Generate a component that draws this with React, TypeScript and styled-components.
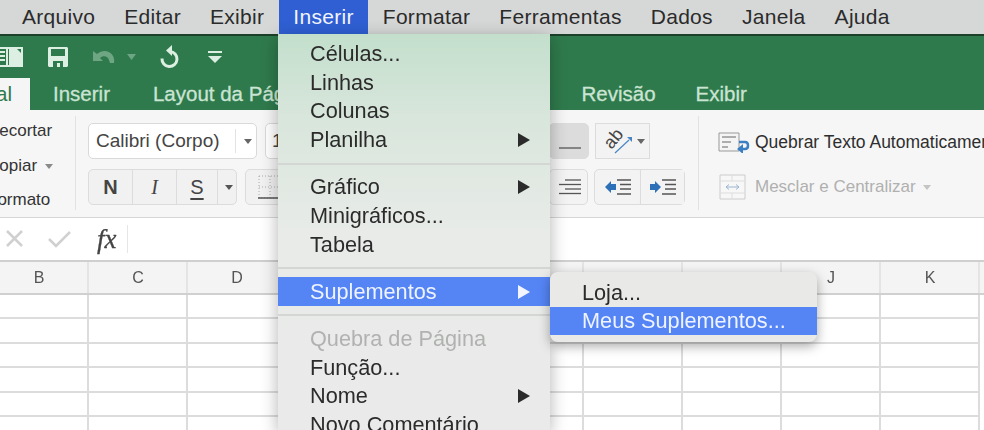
import React from 'react'
import styled, { createGlobalStyle } from 'styled-components'

const GlobalStyle = createGlobalStyle`
	html, body {
		margin: 0;
		padding: 0;
		background: #fff;
		overflow: hidden;
	}
	* {
		box-sizing: border-box;
	}
`

const menuItems = ['Arquivo', 'Editar', 'Exibir', 'Inserir', 'Formatar', 'Ferramentas', 'Dados', 'Janela', 'Ajuda']
// E to I sit behind the open menus
const columns = ['B', 'C', 'D', '', '', '', '', '', 'J', 'K']
const rows = [0, 1, 2, 3, 4, 5]

export default function App() {
	return (
		<Page>
			<GlobalStyle />
			<MenuBar>
				{menuItems.map((item) => (
					<MenuBarItem key={item} $active={item === 'Inserir'}>
						{item}
					</MenuBarItem>
				))}
			</MenuBar>

			<QuickBar>
				<QuickIcon $w={24} $ml={-1}>
					<svg width="24" height="22" viewBox="0 0 24 22">
						<path d="M-2 2h25v18H-2z" fill="none" stroke="#dcefe2" strokeWidth="2" />
						<path d="M8 2v18" stroke="#dcefe2" strokeWidth="2" />
						<path d="M10 3h8l5 5v12H10z" fill="#dcefe2" />
						<path d="M0 6h6M0 10h6M0 14h6" stroke="#dcefe2" strokeWidth="2" />
					</svg>
				</QuickIcon>
				<QuickIcon $w={22} $ml={24}>
					<svg width="22" height="22" viewBox="0 0 22 22">
						<path d="M2 1h18l1 1v18l-1 1H2l-1-1V2z" fill="#dcefe2" />
						<path d="M4 3h14v7H4z" fill="#2f7a4c" />
						<path d="M6 15h10v6H6z" fill="#2f7a4c" />
						<path d="M10 17h3v4h-3z" fill="#dcefe2" />
					</svg>
				</QuickIcon>
				<QuickIcon $w={26} $ml={23}>
					<svg width="26" height="20" viewBox="0 0 26 20">
						<path d="M1 4v10h10L8 11c3-3 8-2 9 2l1 3h4c2-10-9-16-17-9z" fill="#6ea583" />
					</svg>
				</QuickIcon>
				<QuickIcon $w={10} $ml={9}>
					<svg width="10" height="6" viewBox="0 0 10 6">
						<path d="M0 0h9L4.500 6z" fill="#6ea583" />
					</svg>
				</QuickIcon>
				<QuickIcon $w={20} $ml={22}>
					<svg width="20" height="24" viewBox="0 0 20 24">
						<path d="M11 6.500a7.500 7.500 0 1 1-8 7" fill="none" stroke="#dcefe2" strokeWidth="3" />
						<path d="M13 0v11L7 5.500z" fill="#dcefe2" />
					</svg>
				</QuickIcon>
				<QuickIcon $w={14} $ml={29}>
					<svg width="14" height="14" viewBox="0 0 14 14">
						<path d="M0 1h14v2H0z" fill="#dcefe2" />
						<path d="M0 6h14l-7 7z" fill="#dcefe2" />
					</svg>
				</QuickIcon>
			</QuickBar>

			<TabBar>
				<HomeTab>Página Inicial</HomeTab>
				<Tab $ml={23}>Inserir</Tab>
				<Tab $ml={43}>Layout da Página</Tab>
				<Tab $ml={269}>Revisão</Tab>
				<Tab $ml={40}>Exibir</Tab>
			</TabBar>

			<Ribbon>
				<ClipboardGroup>
					<ClipLabel>Recortar</ClipLabel>
					<ClipLabel>
						Copiar <Caret $color="#8a8a8a" />
					</ClipLabel>
					<ClipLabel>Formato</ClipLabel>
				</ClipboardGroup>

				<FontGroup>
					<ControlRow>
						<FontSelect>
							<span>Calibri (Corpo)</span>
							<SelectArrow>
								<Caret $color="#666" />
							</SelectArrow>
						</FontSelect>
						<SizeSelect>12</SizeSelect>
					</ControlRow>
					<ControlRow>
						<ButtonGroup>
							<StyleButton $w={43} $weight={700}>N</StyleButton>
							<StyleButton $w={44} $italic>I</StyleButton>
							<StyleButton $w={41} $underline>S</StyleButton>
							<StyleButton $w={19}>
								<Caret $color="#555" />
							</StyleButton>
						</ButtonGroup>
						<BorderButton>
							<svg width="24" height="24" viewBox="0 0 24 24">
								<path d="M1 1h22v22H1zM12 1v22M1 12h22" fill="none" stroke="#aaa" strokeDasharray="1 2" />
								<path d="M0 23h24" stroke="#555" strokeWidth="1.500" />
							</svg>
						</BorderButton>
					</ControlRow>
				</FontGroup>

				<AlignGroup>
					<AlignRow>
						<IconButton $w={40} $pressed>
							<LinesIcon $lines={[22]} $bottom />
						</IconButton>
						<IconButton $w={55}>
							<svg width="34" height="30" viewBox="0 0 34 30">
								<text x="14" y="18" textAnchor="middle" fontSize="18" fontFamily="Liberation Sans, sans-serif" fill="#444" transform="rotate(-50 14 13)">ab</text>
								<path d="M15 27l14-13" stroke="#4a86c5" strokeWidth="1.200" />
								<path d="M27 11h5v5z" fill="#4a86c5" />
							</svg>
							<Caret $color="#666" />
						</IconButton>
					</AlignRow>
					<AlignRow>
						<IconButton $w={40}>
							<LinesIcon $lines={[16, 22, 16, 22]} />
						</IconButton>
						<ButtonGroup>
							<IconButton $w={45} $flat>
								<IndentIcon $flip />
							</IconButton>
							<IconButton $w={44} $flat>
								<IndentIcon />
							</IconButton>
						</ButtonGroup>
					</AlignRow>
				</AlignGroup>

				<WrapGroup>
					<WrapRow>
						<svg width="32" height="22" viewBox="0 0 32 22">
							<path d="M1 2h20v18H1z" fill="#f4f4f4" stroke="#999" />
							<path d="M4 6h14M4 11h9M4 16h6" stroke="#666" />
							<path d="M21 11h6c4 0 4 7 0 7h-3" fill="none" stroke="#3a7fc4" strokeWidth="2.500" />
							<path d="M25 13v10l-6-5z" fill="#3a7fc4" />
						</svg>
						<WrapLabel>Quebrar Texto Automaticamente</WrapLabel>
					</WrapRow>
					<WrapRow>
						<svg width="32" height="28" viewBox="0 0 32 28">
							<path d="M2 2h25v24H2z" fill="#f7f7f7" stroke="#ccc" />
							<path d="M2 8h25M2 20h25M14 2v6M14 20v6" stroke="#ddd" />
							<path d="M8 14h13M8 14l3-2.500M8 14l3 2.500M21 14l-3-2.500M21 14l-3 2.500" stroke="#9bb6d0" fill="none" />
						</svg>
						<MergeLabel>
							Mesclar e Centralizar <Caret $color="#c4c4c4" />
						</MergeLabel>
					</WrapRow>
				</WrapGroup>
			</Ribbon>

			<FormulaBar>
				<svg width="22" height="20" viewBox="0 0 22 20">
					<path d="M2 2l15 15M17 2L2 17" stroke="#d0d0d0" strokeWidth="2.500" />
				</svg>
				<svg width="26" height="20" viewBox="0 0 26 20">
					<path d="M2 10l7 7L23 3" fill="none" stroke="#d0d0d0" strokeWidth="2.500" />
				</svg>
				<FxLabel>fx</FxLabel>
				<FormulaInput />
			</FormulaBar>

			<Sheet>
				<HeaderRow>
					{columns.map((c, i) => (
						<HeaderCell key={i}>{c}</HeaderCell>
					))}
				</HeaderRow>
				{rows.map((r) => (
					<SheetRow key={r}>
						{columns.map((c, i) => (
							<SheetCell key={i} />
						))}
					</SheetRow>
				))}
			</Sheet>

			<InsertMenu>
				<MenuRow>Células...</MenuRow>
				<MenuRow>Linhas</MenuRow>
				<MenuRow>Colunas</MenuRow>
				<MenuRow $sub>Planilha</MenuRow>
				<Separator />
				<MenuRow $sub>Gráfico</MenuRow>
				<MenuRow>Minigráficos...</MenuRow>
				<MenuRow>Tabela</MenuRow>
				<Separator />
				<MenuRow $sub $selected>Suplementos</MenuRow>
				<Separator />
				<MenuRow $disabled>Quebra de Página</MenuRow>
				<MenuRow>Função...</MenuRow>
				<MenuRow $sub>Nome</MenuRow>
				<MenuRow>Novo Comentário</MenuRow>
			</InsertMenu>

			<SubMenu>
				<SubMenuRow>Loja...</SubMenuRow>
				<SubMenuRow $selected>Meus Suplementos...</SubMenuRow>
			</SubMenu>
		</Page>
	)
}

function Caret({ $color }: { $color: string }) {
	return (
		<CaretMark viewBox="0 0 8 5" width="8" height="5">
			<path d="M0 0h8L4 5z" fill={$color} />
		</CaretMark>
	)
}

function LinesIcon({ $lines, $bottom }: { $lines: number[]; $bottom?: boolean }) {
	return (
		<svg width="24" height="24" viewBox="0 0 24 24">
			{$lines.map((w, i) => (
				<path key={i} d={`M${24 - w} ${$bottom ? 19 : 5 + i * 4.500}h${w}`} stroke="#555" strokeWidth="1.300" />
			))}
		</svg>
	)
}

function IndentIcon({ $flip }: { $flip?: boolean }) {
	return (
		<svg width="28" height="20" viewBox="0 0 28 20">
			<path d="M13 3h14M16 7.500h11M16 12h11M13 17h14" stroke="#555" strokeWidth="1.300" />
			{$flip ? (
				<path d="M1 10l6-6v3h5v6H7v3z" fill="#2d70b8" />
			) : (
				<path d="M12 10L6 4v3H1v6h5v3z" fill="#2d70b8" />
			)}
		</svg>
	)
}

const Page = styled.div`
	position: relative;
	width: 984px;
	height: 430px;
	overflow: hidden;
	font-family: 'Liberation Sans', Arial, sans-serif;
	filter: blur(0.45px);
`

const MenuBar = styled.div`
	display: flex;
	height: 34px;
	padding-left: 7.500px;
	background: #d6d8d8;
`

const MenuBarItem = styled.div<{ $active?: boolean }>`
	display: flex;
	align-items: center;
	height: 34px;
	padding: 0 14.500px;
	font-size: 21px;
	letter-spacing: 0.3px;
	color: ${(p) => (p.$active ? '#f2f5ff' : '#2b2b2b')};
	background: ${(p) => (p.$active ? '#2f5fd3' : 'transparent')};
`

const QuickBar = styled.div`
	display: flex;
	align-items: center;
	height: 44px;
	background: #2f7a4c;
	border-top: 2px solid #1c3f2a;
`

const QuickIcon = styled.div<{ $w: number; $ml: number }>`
	display: flex;
	justify-content: center;
	width: ${(p) => p.$w}px;
	margin-left: ${(p) => p.$ml}px;
`

const TabBar = styled.div`
	display: flex;
	height: 32px;
	background: #2f7a4c;
`

const HomeTab = styled.div`
	display: flex;
	justify-content: flex-end;
	align-items: center;
	width: 30px;
	padding-right: 18px;
	overflow: hidden;
	white-space: nowrap;
	font-size: 20.500px;
	background: #f5f5f5;
	color: #2f7a4c;
`

const Tab = styled.div<{ $ml: number }>`
	display: flex;
	align-items: center;
	margin-left: ${(p) => p.$ml}px;
	font-size: 20.500px;
	white-space: nowrap;
	color: #cbe4d3;
	-webkit-text-stroke: 0.3px #cbe4d3;
`

const Ribbon = styled.div`
	display: flex;
	height: 108px;
	background: #f6f6f6;
	border-bottom: 1px solid #d6d6d6;
	white-space: nowrap;
	& > * {
		flex: none;
	}
`

const ClipboardGroup = styled.div`
	display: flex;
	flex-direction: column;
	justify-content: space-between;
	width: 76px;
	height: 94px;
	margin-top: 6px;
	padding: 5px 0 0;
	overflow: hidden;
	border-right: 1px solid #e2e2e2;
`

const ClipLabel = styled.div`
	margin-left: -13px;
	font-size: 17px;
	color: #333;
`

const CaretMark = styled.svg`
	margin-left: 3px;
	vertical-align: middle;
`

const FontGroup = styled.div`
	display: flex;
	flex-direction: column;
	gap: 10px;
	width: 260px;
	margin-left: 12px;
	padding-top: 13px;
`

const ControlRow = styled.div`
	display: flex;
	gap: 8px;
	height: 36px;
`

const FontSelect = styled.div`
	display: flex;
	align-items: center;
	justify-content: space-between;
	width: 169px;
	padding-left: 7px;
	font-size: 19px;
	color: #444;
	background: #fff;
	border: 1px solid #d9d9d9;
	border-radius: 5px;
`

const SelectArrow = styled.div`
	display: flex;
	align-items: center;
	justify-content: center;
	width: 21px;
	height: 24px;
	border-left: 1px solid #e2e2e2;
`

const SizeSelect = styled.div`
	display: flex;
	align-items: center;
	width: 60px;
	padding-left: 6px;
	font-size: 19px;
	color: #444;
	background: #fff;
	border: 1px solid #d9d9d9;
	border-radius: 5px;
`

const ButtonGroup = styled.div`
	display: flex;
	background: #f1f1f1;
	border: 1px solid #dcdcdc;
	border-radius: 5px;
`

const StyleButton = styled.div<{ $w: number; $weight?: number; $italic?: boolean; $underline?: boolean }>`
	display: flex;
	align-items: center;
	justify-content: center;
	width: ${(p) => p.$w}px;
	font-size: 20px;
	font-weight: ${(p) => p.$weight ?? 400};
	font-style: ${(p) => (p.$italic ? 'italic' : 'normal')};
	font-family: ${(p) => (p.$italic ? "'Liberation Serif', serif" : "'Liberation Sans', sans-serif")};
	text-decoration: ${(p) => (p.$underline ? 'underline' : 'none')};
	text-underline-offset: 4px;
	color: #444;
	& + & {
		border-left: 1px solid #dcdcdc;
	}
`

const BorderButton = styled.div`
	display: flex;
	align-items: center;
	justify-content: center;
	width: 50px;
	background: #f1f1f1;
	border: 1px solid #dcdcdc;
	border-radius: 5px;
`

const AlignGroup = styled.div`
	display: flex;
	flex-direction: column;
	gap: 10px;
	width: 337px;
	padding: 13px 0 0 201px;
`

const AlignRow = styled.div`
	display: flex;
	gap: 6px;
	height: 36px;
`

const IconButton = styled.div<{ $w: number; $pressed?: boolean; $flat?: boolean }>`
	display: flex;
	align-items: center;
	justify-content: center;
	width: ${(p) => p.$w}px;
	background: ${(p) => (p.$pressed ? '#dcdcdc' : '#f3f3f3')};
	border: ${(p) => (p.$flat ? 'none' : '1px solid #dcdcdc')};
	border-radius: 5px;
	& + & {
		${(p) => (p.$flat ? 'border-left: 1px solid #dcdcdc; border-radius: 0;' : '')}
	}
`

const WrapGroup = styled.div`
	display: flex;
	flex-direction: column;
	gap: 17px;
	height: 94px;
	margin-top: 6px;
	margin-left: 13px;
	padding: 12px 0 0 19px;
	border-left: 1px solid #e2e2e2;
`

const WrapRow = styled.div`
	display: flex;
	align-items: center;
	gap: 5px;
	height: 28px;
`

const WrapLabel = styled.div`
	font-size: 17.500px;
	color: #2e2e2e;
`

const MergeLabel = styled.div`
	font-size: 17px;
	color: #b0b0b0;
`

const FormulaBar = styled.div`
	display: flex;
	align-items: center;
	gap: 20px;
	height: 44px;
	padding-left: 5px;
	background: #fff;
	border-bottom: 2px solid #cfcfcf;
`

const FxLabel = styled.div`
	margin-left: 4px;
	font-family: 'Liberation Serif', serif;
	font-size: 27px;
	font-style: italic;
	color: #444;
	-webkit-text-stroke: 0.3px #444;
`

const FormulaInput = styled.div`
	width: 1px;
	height: 28px;
	margin-left: -10px;
	background: #e6e6e6;
`

const Sheet = styled.div`
	display: flex;
	flex-direction: column;
	margin-left: -10px;
`

const HeaderRow = styled.div`
	display: flex;
	height: 33px;
	background: #f4f4f4;
	border-bottom: 2px solid #d0d0d0;
`

const HeaderCell = styled.div`
	display: flex;
	flex: 0 0 99px;
	align-items: center;
	justify-content: center;
	padding-left: 1px;
	font-size: 16px;
	color: #555;
	border-right: 2px solid #e4e4e4;
`

const SheetRow = styled.div`
	display: flex;
	height: 24.400px;
`

const SheetCell = styled.div`
	flex: 0 0 99px;
	border-right: 2px solid #dcdcdc;
	border-bottom: 2px solid #dcdcdc;
`

const InsertMenu = styled.div`
	position: absolute;
	top: 34px;
	left: 278px;
	width: 272px;
	height: 396px;
	padding-top: 5.600px;
	overflow: hidden;
	background: linear-gradient(180deg, #c3dfcc 0%, #d9e6dc 22%, #e8ebe8 50%, #eaeaea 100%);
	box-shadow: 0 4px 16px rgba(0, 0, 0, 0.3);
`

const MenuRow = styled.div<{ $sub?: boolean; $selected?: boolean; $disabled?: boolean }>`
	position: relative;
	display: flex;
	align-items: center;
	height: 28.700px;
	padding-left: 32px;
	font-size: 21.700px;
	white-space: nowrap;
	color: ${(p) => (p.$selected ? '#eef3ff' : p.$disabled ? '#b0b2b0' : '#2b2b2b')};
	background: ${(p) => (p.$selected ? '#5585f5' : 'transparent')};
	${(p) =>
		p.$sub
			? `&::after {
		content: '';
		position: absolute;
		right: 20px;
		top: 50%;
		margin-top: -7px;
		border-left: 12px solid ${p.$selected ? '#f2f5ff' : '#2b2b2b'};
		border-top: 7px solid transparent;
		border-bottom: 7px solid transparent;
	}`
			: ''}
`

const Separator = styled.div`
	height: 2px;
	margin: 8.250px 0;
	background: #d3d6d3;
`

const SubMenu = styled.div`
	position: absolute;
	top: 272px;
	left: 550px;
	width: 267px;
	height: 70px;
	padding-top: 6px;
	background: #e9e9e7;
	border-radius: 8px;
	box-shadow: 0 4px 12px rgba(0, 0, 0, 0.35);
`

const SubMenuRow = styled.div<{ $selected?: boolean }>`
	display: flex;
	align-items: center;
	height: ${(p) => (p.$selected ? '28px' : '29px')};
	padding-left: 32px;
	font-size: 21.700px;
	color: ${(p) => (p.$selected ? '#eef3ff' : '#2b2b2b')};
	background: ${(p) => (p.$selected ? '#5585f5' : 'transparent')};
`
